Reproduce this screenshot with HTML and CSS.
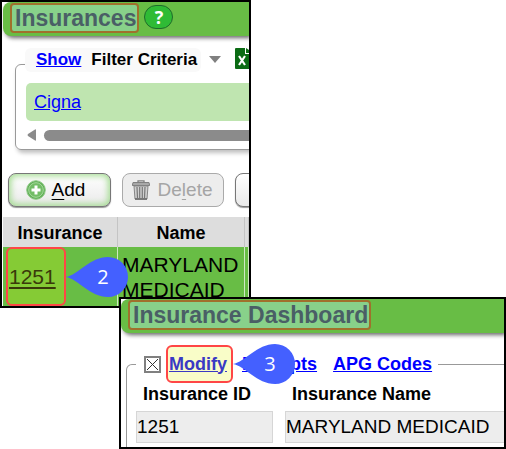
FILE: index.html
```html
<!DOCTYPE html>
<html lang="en">
<head>
    <meta charset="UTF-8">
    <meta name="viewport" content="width=device-width, initial-scale=1.0">
    <title>Insurances</title>
    <link rel="stylesheet" href="styles.css">
</head>
<body>
    <!-- Insurance list -->
    <section class="window window-list">
        <header class="title-bar">
            <h1 class="title">Insurances</h1>
            <button type="button" class="btn-help" aria-label="Help">?</button>
        </header>

        <fieldset class="panel filter-panel">
            <legend class="filter-legend">
                <span class="filter-label"><a href="#">Show</a><span>Filter Criteria</span></span>
                <svg class="arrow" width="12" height="7" viewBox="0 0 12 7"><path d="M0 0h12L6 7z" fill="#808080"/></svg>
                <svg class="excel" width="20" height="21" viewBox="0 0 20 21">
                    <path d="M1 0h9v6h9v14a1 1 0 0 1-1 1H1a1 1 0 0 1-1-1V1a1 1 0 0 1 1-1z" fill="#0b6b14"/>
                    <path d="M11 0l8 5h-8z" fill="#0b6b14"/>
                    <path d="M4 8l6 9M10 8l-6 9" stroke="#fff" stroke-width="2.2" fill="none"/>
                </svg>
            </legend>
            <div class="filter-item"><a href="#">Cigna</a></div>
            <div class="scrollbar">
                <svg width="10" height="12" viewBox="0 0 10 12"><path d="M1 5L8 .5q1-.5 1 .5v10q0 1-1 .5L1 7q-1-1 0-2z" fill="#8b8b8b"/></svg>
                <div class="scroll-thumb"></div>
            </div>
        </fieldset>

        <div class="toolbar">
            <button type="button" class="btn btn-add">
                <svg width="20" height="20" viewBox="0 0 20 20">
                    <circle cx="10" cy="10" r="9.3" fill="#5fae55" stroke="#8fca86"/>
                    <circle cx="10" cy="10" r="7.3" fill="#72bd66" stroke="#a6d99d"/>
                    <path d="M10 5.500v9M5.500 10h9" stroke="#fff" stroke-width="3"/>
                </svg>
                <span><u>A</u>dd</span>
            </button>
            <button type="button" class="btn btn-delete" disabled>
                <svg width="18" height="20" viewBox="0 0 18 20">
                    <path d="M6 2V.8h6V2" fill="none" stroke="#808080" stroke-width="1.300"/>
                    <path d="M1 2.500h16l.7 3H.3z" fill="#a8a8a8" stroke="#808080"/>
                    <path d="M2 6h14l-1 13H3z" fill="#d0d0d0" stroke="#858585"/>
                    <path d="M5 7l.5 11M7.700 7v11M10.300 7v11M13 7l-.5 11" stroke="#777" stroke-width="1.200"/>
                    <path d="M3 19h12" stroke="#666" stroke-width="1.500"/>
                </svg>
                <span>De<u>l</u>ete</span>
            </button>
            <button type="button" class="btn btn-more" aria-label="More"></button>
        </div>

        <table class="list">
            <thead>
                <tr>
                    <th class="col-id">Insurance</th>
                    <th class="col-name">Name</th>
                    <th></th>
                </tr>
            </thead>
            <tbody>
                <tr>
                    <td class="cell-id">
                        <div class="mark mark-id">
                            <a href="#">1251</a>
                            <div class="callout">
                                <svg width="62" height="40" viewBox="0 0 62 40"><path d="M0 20C12 18 24 0 42 0a20 20 0 0 1 0 40C24 40 12 22 0 20z" fill="#4460ff"/></svg>
                                <span class="callout-number">2</span>
                            </div>
                        </div>
                    </td>
                    <td class="cell-name">MARYLAND MEDICAID</td>
                    <td></td>
                </tr>
            </tbody>
        </table>
    </section>

    <!-- Insurance details -->
    <section class="window window-dashboard">
        <header class="title-bar">
            <h2 class="title">Insurance Dashboard</h2>
        </header>

        <fieldset class="panel detail-panel">
            <legend class="detail-legend">
                <input type="checkbox" class="toggle" aria-label="Show section" checked>
                <div class="mark mark-modify">
                    <a href="#">Modify</a>
                    <div class="callout">
                        <svg width="62" height="40" viewBox="0 0 62 40"><path d="M0 20C12 18 24 0 42 0a20 20 0 0 1 0 40C24 40 12 22 0 20z" fill="#4460ff"/></svg>
                        <span class="callout-number">3</span>
                    </div>
                </div>
                <span class="detail-links"><a href="#">Receipts</a><a href="#">APG Codes</a></span>
            </legend>
            <div class="fields">
                <div class="field">
                    <label for="insuranceId">Insurance ID</label>
                    <input type="text" id="insuranceId" value="1251" readonly>
                </div>
                <div class="field">
                    <label for="insuranceName">Insurance Name</label>
                    <input type="text" id="insuranceName" value="MARYLAND MEDICAID" readonly>
                </div>
            </div>
        </fieldset>
    </section>
</body>
</html>
```
FILE: styles.css
```css
* {
    box-sizing: border-box;
}

body {
    margin: 0;
    font-family: "Liberation Sans", Arial, sans-serif;
    font-size: 18px;
    color: #000;
    background-color: #fff;
}

a {
    color: #0000ff;
}

svg {
    display: block;
    flex: none;
}

/* Windows */
.window {
    position: relative;
    border: 2px solid #000;
    background-color: #fff;
    overflow: hidden;
}
.window-list {
    width: calc(50% - 2px);
    padding-left: 1px;
}
/* Lies over the bottom corner of the list */
.window-dashboard {
    margin: -11px 0 0 119px;
}

/* Title bars */
.title-bar {
    display: flex;
    align-items: flex-start;
    gap: 5px;
    height: 34px;
    padding: 1px 0 0 7px;
    background-color: #68bd45;
    border-radius: 8px 0 0 8px;
    box-shadow: 2px 2px 4px rgba(0, 0, 0, 0.6);
}
.title {
    margin: 0;
    padding: 0 1px 0 3px;
    border: 2px solid #a0702c;
    border-radius: 4px;
    background-color: #88d18a;
    color: #4a5f66;
    font-size: 23px;
    line-height: 26px;
    white-space: nowrap;
}
.btn-help {
    width: 29px;
    height: 24px;
    margin: 2px 0 0;
    padding: 0;
    border: 1px solid #1f6b2a;
    border-radius: 12px;
    background-color: #2fbb35;
    color: #fff;
    font-family: "Open Sans", sans-serif;
    font-size: 18px;
    font-weight: bold;
    line-height: 20px;
}

/* Panels run past the right side of the window */
.panel {
    min-width: 0;
    border: 1px solid #999;
    border-radius: 6px;
}

/* Filter */
.filter-panel {
    margin: 12px -20px 0 12px;
    padding: 3px 0 8px 10px;
    box-shadow: 2px 3px 4px rgba(0, 0, 0, 0.25);
}
.filter-legend {
    display: flex;
    align-items: flex-start;
    width: 100%;
    height: 32px;
    margin-left: -1px;
    padding: 0;
    background-color: #fff;
}
.filter-label {
    display: flex;
    gap: 10px;
    flex: none;
    padding: 0 4px 0 11px;
    border-radius: 6px;
    background-color: #f9f9f9;
    font-size: 17px;
    font-weight: bold;
    line-height: 24px;
}
.arrow {
    margin: 8px 14px 0 8px;
}
.filter-item {
    padding: 0 8px;
    border-radius: 5px;
    background-color: #bfe5b0;
    line-height: 38px;
}
.scrollbar {
    display: flex;
    align-items: center;
    gap: 7px;
    margin-top: 8px;
    padding-left: 1px;
}
.scroll-thumb {
    flex: 1;
    height: 11px;
    border-radius: 6px;
    background-color: #8b8b8b;
}

/* Buttons */
.toolbar {
    display: flex;
    gap: 11px;
    margin-top: 23px;
    padding-left: 5px;
}
.btn {
    display: flex;
    flex: none;
    align-items: center;
    justify-content: center;
    height: 34px;
    padding: 0 10px;
    border: 1px solid #777;
    border-radius: 8px;
    background-image: linear-gradient(#fff, #e9e9e9);
    box-shadow: 0 1px 1px rgba(0, 0, 0, 0.4);
    color: #000;
    font-family: inherit;
    font-size: 19px;
}
.btn u {
    text-underline-offset: 3px;
    text-decoration-thickness: 1px;
}
.btn-add {
    gap: 6px;
    width: 103px;
    padding-right: 18px;
    box-shadow: inset 0 0 6px 2px #a5dc93, 0 1px 1px rgba(0, 0, 0, 0.4);
}
.btn-delete {
    gap: 8px;
    width: 102px;
    padding-right: 12px;
    border-color: #aaa;
    background-image: none;
    background-color: #ededed;
    box-shadow: none;
    color: #a5a5a5;
}
.btn-more {
    width: 80px;
}

/* List */
.list {
    width: 100%;
    margin-top: 10px;
    border-collapse: separate;
    border-spacing: 0;
    table-layout: fixed;
}
.list th {
    height: 30px;
    padding: 2px 0 0;
    border-right: 1px solid #c4c4c4;
    background-color: #ddd;
}
.list td {
    height: 59px;
    padding: 0;
    border-right: 1px solid #cfe8c4;
    background-color: #68bd45;
    font-size: 21px;
    line-height: 25px;
}
.list .col-id {
    width: 115px;
}
.list .col-name {
    width: 127px;
}
.list .cell-id {
    padding-left: 3px;
}
.list .cell-name {
    padding-left: 4px;
}

/* Highlights and numbered callouts */
.mark {
    position: relative;
    display: flex;
    align-items: center;
    border: 2px solid #ff4646;
    border-radius: 6px;
}
.mark-id {
    width: 60px;
    height: 59px;
    padding-left: 1px;
    background-color: #85cb35;
}
.mark-id a {
    color: #3a3a0a;
    text-underline-offset: 3px;
}
.mark-modify {
    height: 38px;
    padding: 0 4px 0 1px;
    background-color: #f9fdc8;
}
.mark-modify a {
    color: #3a3ac4;
}
.callout {
    position: absolute;
    left: 100%;
    top: 50%;
    z-index: 1;
    margin: -20px 0 0 2px;
}
.callout-number {
    position: absolute;
    inset: 0;
    padding-left: 12px;
    color: #fff;
    font-family: "Open Sans", sans-serif;
    font-size: 20px;
    font-weight: normal;
    line-height: 40px;
    text-align: center;
}

/* Details */
.detail-panel {
    margin: 12px -20px 0 5px;
    padding: 0 0 4px 9px;
    border-bottom: none;
    border-radius: 6px 0 0 0;
}
.detail-legend {
    display: flex;
    align-items: center;
    gap: 5px;
    padding: 0 6px 0 8px;
    font-weight: bold;
}
.toggle {
    appearance: none;
    width: 17px;
    height: 17px;
    margin: 0;
    border: 2px solid #808080;
    background-color: #fff;
    background-origin: content-box;
    background-repeat: no-repeat;
    padding: 1px;
}
.toggle:checked {
    background-image:
        linear-gradient(45deg, transparent 46%, #333 46%, #333 54%, transparent 54%),
        linear-gradient(-45deg, transparent 46%, #333 46%, #333 54%, transparent 54%);
}
.detail-links {
    display: flex;
    gap: 16px;
    padding-left: 4px;
}
.fields {
    display: grid;
    grid-template-columns: 137px 1fr;
    gap: 12px;
}
.field {
    display: flex;
    flex-direction: column;
    gap: 6px;
}
.field label {
    padding-left: 7px;
    font-weight: bold;
    line-height: 22px;
}
.field input {
    width: 100%;
    height: 32px;
    padding: 0;
    border: 1px solid #d6d6d6;
    background-color: #ededed;
    color: #000;
    font-family: inherit;
    font-size: 19px;
}
```
